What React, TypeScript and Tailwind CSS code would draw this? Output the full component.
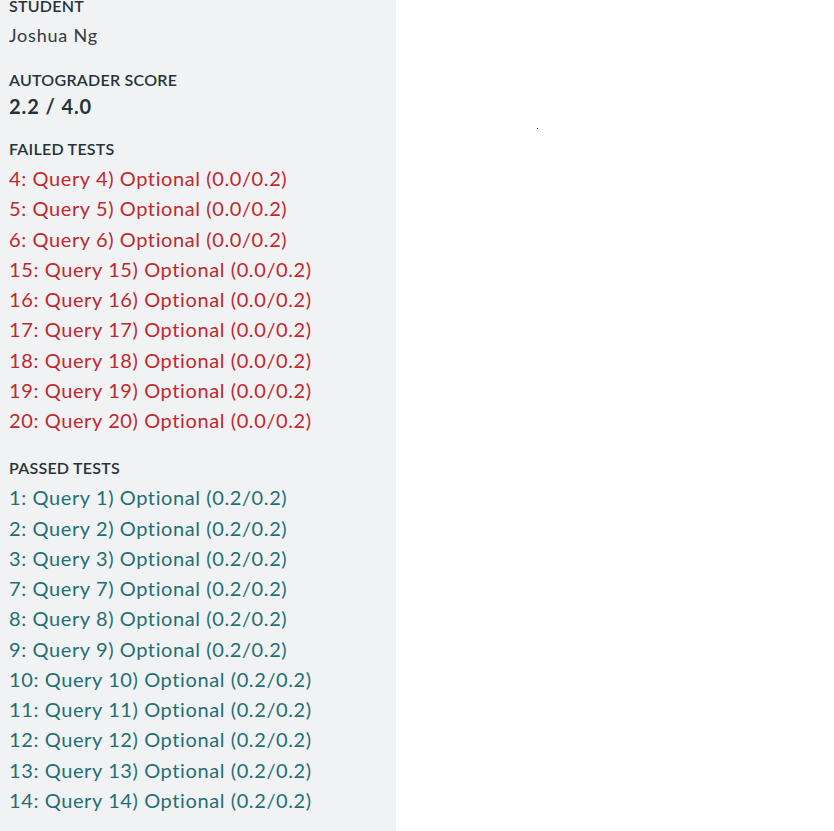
import React from "react";

const failed = [4, 5, 6, 15, 16, 17, 18, 19, 20];
const passed = [1, 2, 3, 7, 8, 9, 10, 11, 12, 13, 14];

export default function App() {
  return (
    <div
      className="flex h-[831px] w-[834px] overflow-hidden bg-white"
      style={{ fontFamily: '"Lato", "Open Sans", sans-serif' }}
    >
      <aside className="flex w-[396px] shrink-0 flex-col bg-[#f1f2f4] pl-[9px]">
        <div className="mt-[-6px] text-[16px] font-semibold uppercase leading-[24px] tracking-[0.25px] text-[#263238]">
          Student
        </div>
        <div className="text-[18px] leading-[34px] tracking-[0.8px] text-[#333a3f]">Joshua Ng</div>
        <div className="mt-[16px] text-[16px] font-semibold uppercase leading-[24px] tracking-[0.25px] text-[#263238]">
          Autograder Score
        </div>
        <div className="text-[20px] font-bold leading-[28px] tracking-[0.9px] text-[#263238]">2.2 / 4.0</div>
        <div className="mt-[17px] text-[16px] font-semibold uppercase leading-[24px] tracking-[0.25px] text-[#263238]">
          Failed Tests
        </div>
        <ul className="mt-[2px]">
          {failed.map((n) => (
            <li key={n} className="text-[20px] leading-[30.25px] tracking-[0.6px] text-[#c0282d]">
              {n}: Query {n}) Optional (0.0/0.2)
            </li>
          ))}
        </ul>
        <div className="mt-[21px] text-[16px] font-semibold uppercase leading-[24px] tracking-[0.25px] text-[#263238]">
          Passed Tests
        </div>
        <ul className="mt-[2px]">
          {passed.map((n) => (
            <li key={n} className="text-[20px] leading-[30.25px] tracking-[0.6px] text-[#1f6f73]">
              {n}: Query {n}) Optional (0.2/0.2)
            </li>
          ))}
        </ul>
      </aside>
      <main className="flex-1">
        <div className="ml-[141px] mt-[128px] h-px w-px bg-[#333]" />
      </main>
    </div>
  );
}
